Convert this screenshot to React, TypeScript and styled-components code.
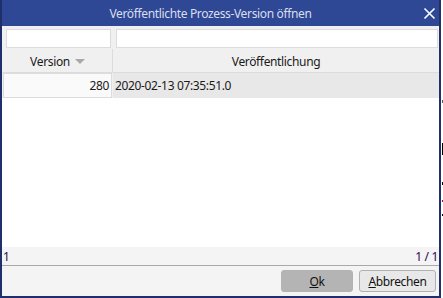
import React from 'react'
import styled, { createGlobalStyle } from 'styled-components'

const GlobalStyle = createGlobalStyle`
  html, body {
    margin: 0;
    padding: 0;
    background: #ffffff;
  }
  body {
    font-family: 'Segoe UI', 'Noto Sans', 'Open Sans', sans-serif;
    font-size: 12px;
    letter-spacing: -0.35px;
  }
`

const Page = styled.div`
  display: flex;
  width: 443px;
  height: 298px;
  overflow: hidden;
`

const Dialog = styled.div`
  display: flex;
  flex-direction: column;
  width: 437px;
  height: 296px;
  border: solid #1e2f6c;
  border-width: 0 2px 2px 2px;
  background: #f0f0f0;
`

const TitleBar = styled.div`
  position: relative;
  display: flex;
  align-items: center;
  justify-content: center;
  height: 26px;
  padding-right: 20px;
  background: #2e4896;
  color: #d9deec;
  font-size: 12px;
  flex-shrink: 0;
`

const CloseButton = styled.div`
  position: absolute;
  right: 3px;
  top: 7px;
  width: 13px;
  height: 13px;
  display: flex;
`

const FilterRow = styled.div`
  display: grid;
  grid-template-columns: 105px 1fr;
  gap: 5px;
  padding: 3px 1px 1px 4px;
`

const FilterInput = styled.div`
  height: 17px;
  background: #ffffff;
  border: 1px solid #dcdcdc;
`

const HeaderRow = styled.div`
  display: grid;
  grid-template-columns: 110px 1fr;
  height: 23px;
  padding-left: 1px;
  border-bottom: 1px solid #dcdcdc;
`

const HeaderCell = styled.div<{ divider?: boolean }>`
  display: flex;
  align-items: center;
  justify-content: center;
  gap: 5px;
  padding-top: 1px;
  color: #1a1a1a;
  border-right: ${(p) => (p.divider ? '1px solid #dcdcdc' : 'none')};
`

const SortArrow = styled.span`
  width: 0;
  height: 0;
  border-left: 5px solid transparent;
  border-right: 5px solid transparent;
  border-top: 5px solid #a8a8a8;
`

const TableArea = styled.div`
  flex: 1;
  display: flex;
  flex-direction: column;
  background: #ffffff;
`

const DataRow = styled.div`
  display: grid;
  grid-template-columns: 110px 1fr;
  height: 25px;
  background: #f0f0f0;
  padding-left: 1px;
`

const DataCell = styled.div<{ align?: 'left' | 'right'; selected?: boolean }>`
  display: flex;
  align-items: center;
  justify-content: ${(p) => (p.align === 'right' ? 'flex-end' : 'flex-start')};
  padding: 0 2px;
  color: #1a1a1a;
  background: ${(p) => (p.selected ? '#fafafa' : '#e8e8e8')};
  border: ${(p) => (p.selected ? '1px solid #dcdcdc' : 'none')};
  margin-right: ${(p) => (p.selected ? '1px' : '0')};
`

const StatusBar = styled.div`
  display: flex;
  justify-content: space-between;
  align-items: center;
  height: 18px;
  padding: 0 1px;
  background: #f4f4f4;
  color: #2e0848;
  border-bottom: 1px solid #a9a9a9;
`

const ButtonBar = styled.div`
  display: flex;
  justify-content: flex-end;
  align-items: center;
  gap: 6px;
  height: 30px;
  padding-right: 3px;
  background: #f4f4f4;
`

const Button = styled.div<{ primary?: boolean }>`
  display: flex;
  align-items: center;
  justify-content: center;
  height: 20px;
  width: ${(p) => (p.primary ? '70px' : '75px')};
  border-radius: 3px;
  border: 1px solid ${(p) => (p.primary ? '#b2b2b2' : '#b0b0b0')};
  background: ${(p) => (p.primary ? '#b4b4b4' : '#e8e8e8')};
  color: #111111;
  u {
    text-decoration: underline;
  }
`

const Backdrop = styled.div`
  position: relative;
  flex: 1;
  background: #ffffff;
`

const Mark = styled.div<{ top: number; h: number; color: string }>`
  position: absolute;
  left: 1px;
  top: ${(p) => p.top}px;
  width: 2px;
  height: ${(p) => p.h}px;
  background: ${(p) => p.color};
`

export default function App() {
  return (
    <>
      <GlobalStyle />
      <Page>
        <Dialog>
          <TitleBar>
            Veröffentlichte Prozess-Version öffnen
            <CloseButton>
              <svg width="13" height="13" viewBox="0 0 13 13">
                <path d="M1.5 1.5 L11.5 11.5 M11.5 1.5 L1.5 11.5" stroke="#ffffff" strokeWidth="1.6" />
              </svg>
            </CloseButton>
          </TitleBar>
          <FilterRow>
            <FilterInput />
            <FilterInput />
          </FilterRow>
          <HeaderRow>
            <HeaderCell divider>
              Version <SortArrow />
            </HeaderCell>
            <HeaderCell>Veröffentlichung</HeaderCell>
          </HeaderRow>
          <TableArea>
            <DataRow>
              <DataCell align="right" selected>
                280
              </DataCell>
              <DataCell>2020-02-13 07:35:51.0</DataCell>
            </DataRow>
          </TableArea>
          <StatusBar>
            <span>1</span>
            <span>1 / 1</span>
          </StatusBar>
          <ButtonBar>
            <Button primary>
              <span>
                <u>O</u>k
              </span>
            </Button>
            <Button>
              <span>
                <u>A</u>bbrechen
              </span>
            </Button>
          </ButtonBar>
        </Dialog>
        <Backdrop>
          <Mark top={100} h={3} color="#555" />
          <Mark top={143} h={12} color="#000" />
          <Mark top={182} h={3} color="#000" />
          <Mark top={200} h={2} color="#7a1a5a" />
          <Mark top={214} h={2} color="#000" />
        </Backdrop>
      </Page>
    </>
  )
}
